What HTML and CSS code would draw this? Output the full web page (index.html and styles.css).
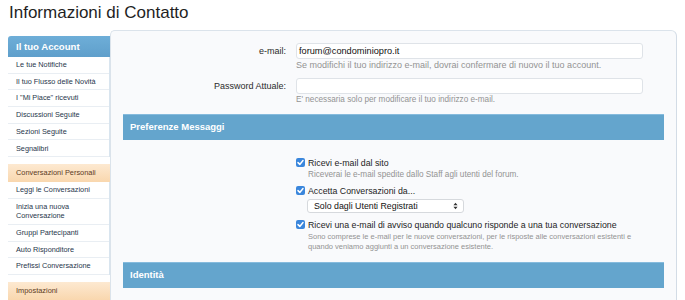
FILE: index.html
```html
<!DOCTYPE html>
<html lang="it">
<head>
<meta charset="utf-8">
<title>Informazioni di Contatto</title>
<link rel="stylesheet" href="styles.css">
</head>
<body>
<h1 class="title">Informazioni di Contatto</h1>
<div class="layout">
  <nav class="sidebar">
    <div class="side-head blue">Il tuo Account</div>
    <ul class="side-list">
      <li>Le tue Notifiche</li>
      <li>Il tuo Flusso delle Novità</li>
      <li>I "Mi Piace" ricevuti</li>
      <li>Discussioni Seguite</li>
      <li>Sezioni Seguite</li>
      <li>Segnalibri</li>
    </ul>
    <div class="side-head orange">Conversazioni Personali</div>
    <ul class="side-list">
      <li>Leggi le Conversazioni</li>
      <li>Inizia una nuova<br>Conversazione</li>
      <li>Gruppi Partecipanti</li>
      <li>Auto Risponditore</li>
      <li>Prefissi Conversazione</li>
    </ul>
    <div class="side-head orange">Impostazioni</div>
  </nav>
  <main class="content">
    <div class="form-row">
      <label class="label">e-mail:</label>
      <div class="ctrl">
        <div class="input">forum@condominiopro.it</div>
        <p class="hint wide">Se modifichi il tuo indirizzo e-mail, dovrai confermare di nuovo il tuo account.</p>
      </div>
    </div>
    <div class="form-row">
      <label class="label">Password Attuale:</label>
      <div class="ctrl">
        <div class="input"></div>
        <p class="hint">E' necessaria solo per modificare il tuo indirizzo e-mail.</p>
      </div>
    </div>
    <h2 class="section-head">Preferenze Messaggi</h2>
    <div class="checks">
      <div class="check">
        <span class="box"><svg viewBox="0 0 9 9" width="9" height="9"><path d="M2 4.6 L3.8 6.4 L7 2.6" fill="none" stroke="#fff" stroke-width="1.5" stroke-linecap="round" stroke-linejoin="round"/></svg></span>
        <span class="check-label">Ricevi e-mail dal sito</span>
      </div>
      <p class="hint indent">Riceverai le e-mail spedite dallo Staff agli utenti del forum.</p>
      <div class="check">
        <span class="box"><svg viewBox="0 0 9 9" width="9" height="9"><path d="M2 4.6 L3.8 6.4 L7 2.6" fill="none" stroke="#fff" stroke-width="1.5" stroke-linecap="round" stroke-linejoin="round"/></svg></span>
        <span class="check-label">Accetta Conversazioni da...</span>
      </div>
      <div class="select">
        <span>Solo dagli Utenti Registrati</span>
        <svg viewBox="0 0 6 9" width="5" height="8"><path d="M0.5 3.6 L3 0.6 L5.5 3.6 Z M0.5 5.4 L3 8.4 L5.5 5.4 Z" fill="#333"/></svg>
      </div>
      <div class="check">
        <span class="box"><svg viewBox="0 0 9 9" width="9" height="9"><path d="M2 4.6 L3.8 6.4 L7 2.6" fill="none" stroke="#fff" stroke-width="1.5" stroke-linecap="round" stroke-linejoin="round"/></svg></span>
        <span class="check-label">Ricevi una e-mail di avviso quando qualcuno risponde a una tua conversazione</span>
      </div>
      <p class="hint indent long">Sono comprese le e-mail per le nuove conversazioni, per le risposte alle conversazioni esistenti e<br>quando veniamo aggiunti a un conversazione esistente.</p>
    </div>
    <h2 class="section-head identity">Identità</h2>
  </main>
</div>
</body>
</html>
```
FILE: styles.css
```css
* { box-sizing: border-box; }
html, body { margin: 0; padding: 0; background: #fff; }
body {
  font-family: "Liberation Sans", Arial, sans-serif;
  color: #222;
  width: 685px;
  height: 300px;
  overflow: hidden;
}
.title {
  margin: 0;
  padding: 3px 0 0 9px;
  height: 30px;
  font-size: 17px;
  font-weight: normal;
  line-height: 20px;
  color: #1f1f1f;
}
.layout {
  display: flex;
  padding: 0 8px 0 8px;
}
.sidebar {
  width: 102px;
  flex: none;
  padding-top: 6px;
}
.side-head {
  font-size: 7.4px;
  line-height: 10px;
  padding-left: 8px;
}
.side-head.blue {
  height: 21px;
  padding-top: 6px;
  font-size: 9.6px;
  font-weight: bold;
  color: #fff;
  background: linear-gradient(#6eaed8, #5f9fcb);
  border-top-left-radius: 3px;
}
.side-head.orange {
  height: 18px;
  padding-top: 4px;
  margin-top: 7px;
  color: #5b3a1e;
  background: linear-gradient(#fde9d1, #f9d7ae);
}
.side-list {
  list-style: none;
  margin: 0;
  padding: 0;
  border-right: 1px solid #d9e5ef;
}
.side-list li {
  font-size: 7.3px;
  line-height: 9.5px;
  padding: 3.1px 0 3.1px 8px;
  color: #1f364b;
  border-bottom: 1px solid #e9eef3;
}
.content {
  flex: 1;
  height: 280px;
  background: #f9fafc;
  border: 1px solid #dbe3eb;
  border-right-color: #d3dce6;
  border-radius: 5px 6px 0 0;
  padding: 12px 12px 0 12px;
}
.form-row {
  display: flex;
  align-items: flex-start;
}
.label {
  width: 163px;
  flex: none;
  text-align: right;
  font-size: 9px;
  line-height: 16px;
  color: #2b2b2b;
  margin-right: 10px;
}
.ctrl { width: 347px; }
.input {
  height: 16px;
  background: #fff;
  border: 1px solid #dfe3e8;
  border-radius: 3px;
  font-size: 9.2px;
  line-height: 14px;
  padding-left: 2px;
  color: #111;
}
.hint {
  margin: 0;
  font-size: 8.2px;
  line-height: 10px;
  color: #939393;
  padding: 1px 0 8px 0;
  white-space: nowrap;
}
.hint.wide { font-size: 9px; }
.section-head {
  margin: 1px 0 0 0;
  height: 26px;
  background: #64a5cd;
  border-top: 1px solid #86bbdd;
  font-size: 9.5px;
  font-weight: bold;
  color: #fff;
  line-height: 24px;
  padding-left: 7px;
}
.checks {
  padding: 17px 0 0 173px;
  height: 122px;
}
.check {
  display: flex;
  align-items: center;
  height: 11px;
}
.box {
  width: 9px;
  height: 9px;
  border-radius: 2px;
  background: #3a86dc;
  margin-right: 3px;
  display: flex;
}
.check-label {
  font-size: 8.8px;
  color: #1d1d1d;
}
.hint.indent {
  padding: 2px 0 5px 12px;
}
.hint.long { font-size: 7.5px; }
.select {
  margin: 3px 0 6px 11px;
  width: 157px;
  height: 14px;
  background: #fff;
  border: 1px solid #d6d9dd;
  border-radius: 3px;
  display: flex;
  align-items: center;
  justify-content: space-between;
  padding: 0 5px 0 6px;
  font-size: 8.8px;
  color: #111;
}
.identity { margin-top: 0; }
```
